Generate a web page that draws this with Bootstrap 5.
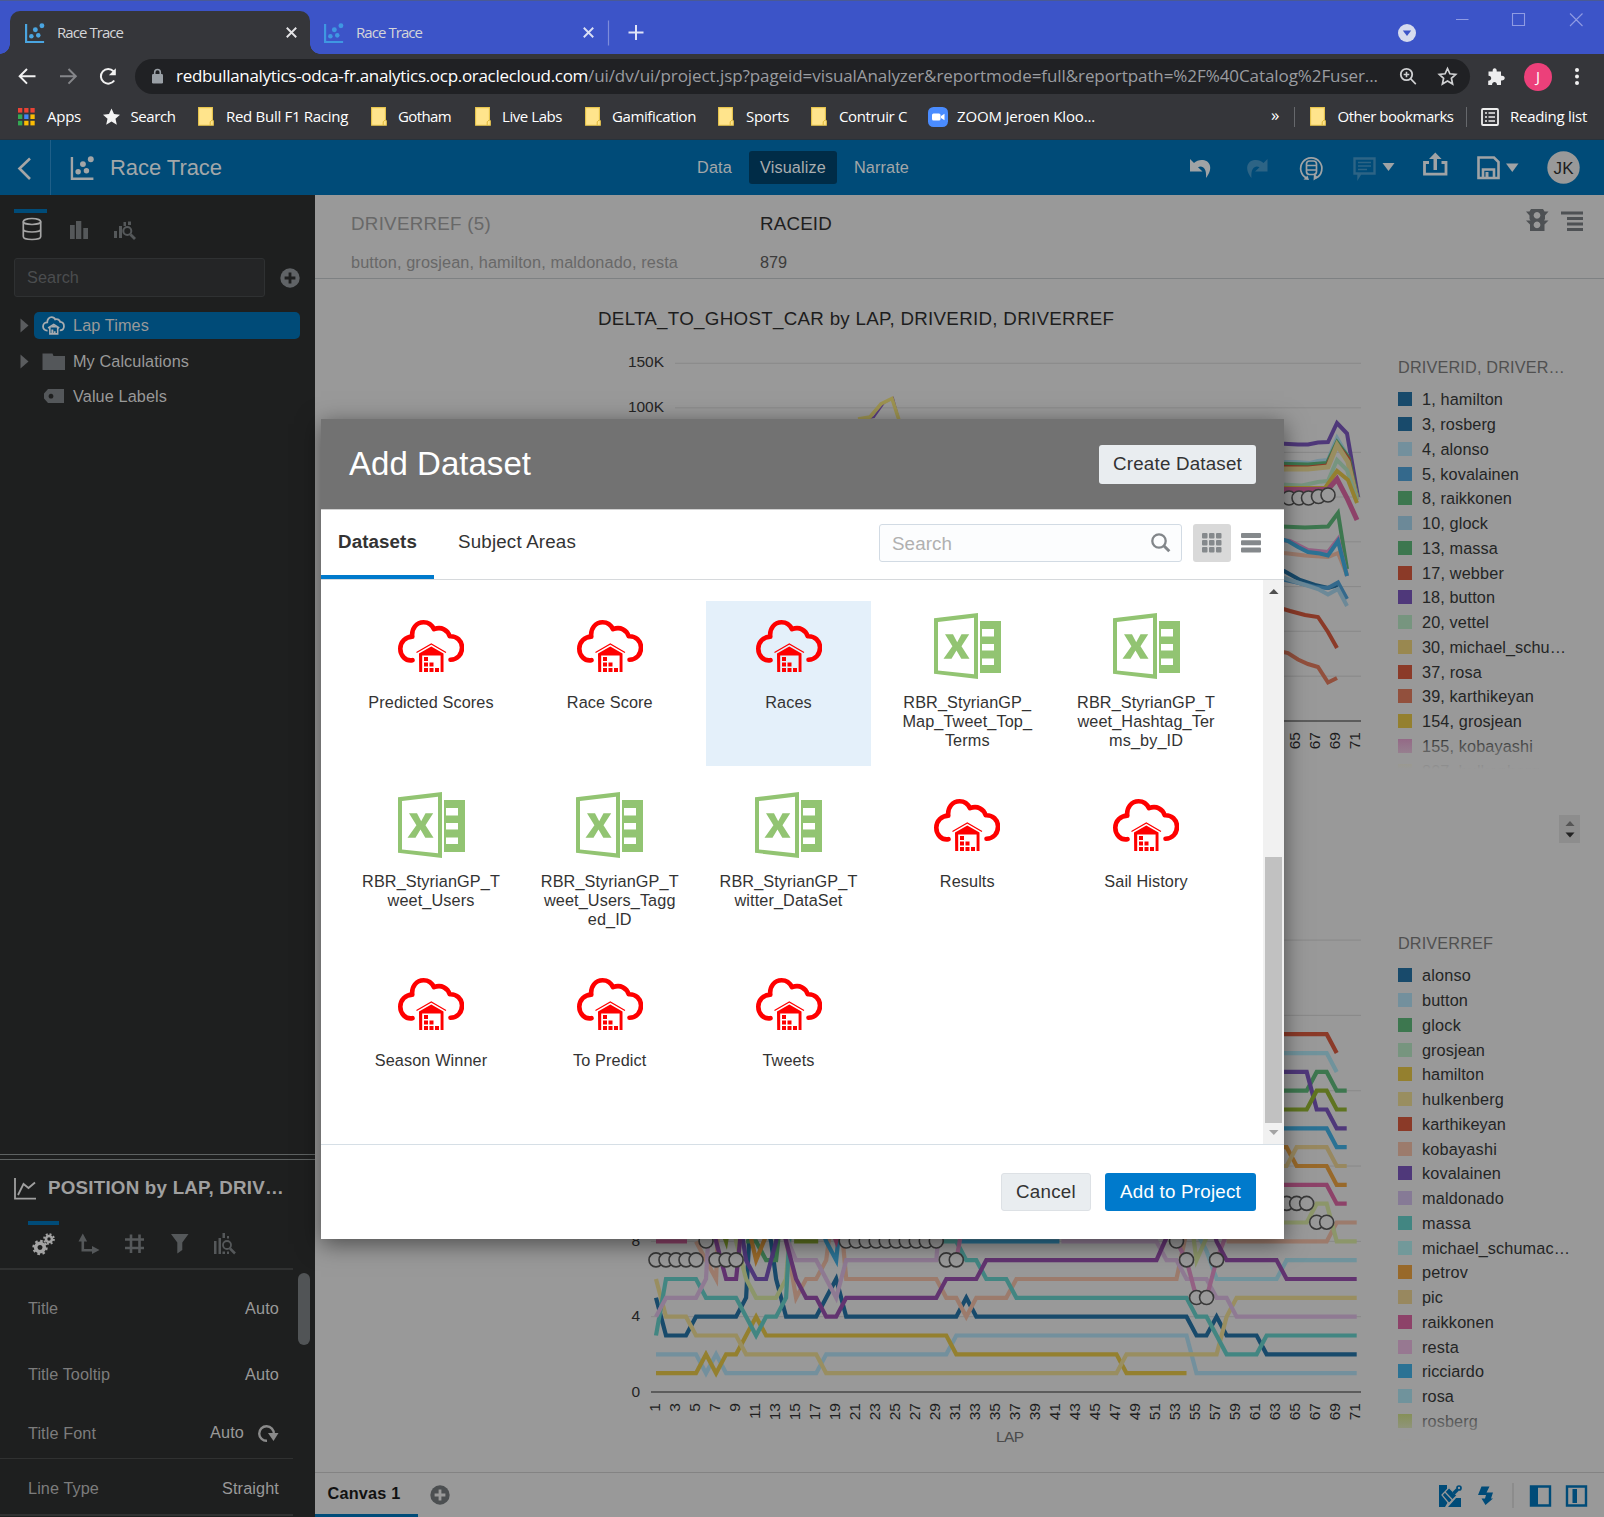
<!DOCTYPE html>
<html lang="en">
<head>
<meta charset="utf-8">
<meta name="viewport" content="width=device-width, initial-scale=1">
<title>Race Trace</title>
<link href="https://cdn.jsdelivr.net/npm/bootstrap@5.3.0/dist/css/bootstrap.min.css" rel="stylesheet">
<style>
body{width:1604px;height:1517px;overflow:hidden;background:#999;font-family:"Liberation Sans",Arial,sans-serif;font-size:16.25px;line-height:19px;color:#1f2020}
svg{display:block;flex:none}
.nowr,[data-w]{white-space:nowrap}
/* browser chrome */
.chrome{font-family:"Open Sans","Noto Sans",sans-serif;color:#fff}
.tabstrip{height:54px;background:#3c54c8;border-top:1px solid #4a5a94;padding:10px 0 0 10px}
.tab-on{width:300px;height:43px;background:#35363a;border-radius:10px 10px 0 0;padding:0 13px 0 15px;position:relative}
.tab-on::before,.tab-on::after{content:"";position:absolute;bottom:0;width:10px;height:10px}
.tab-on::before{left:-10px;background:radial-gradient(circle at 0 0,transparent 9.5px,#35363a 10px)}
.tab-on::after{right:-10px;background:radial-gradient(circle at 100% 0,transparent 9.5px,#35363a 10px)}
.tab-off{width:284px;height:43px;padding:0 0 0 14px}
.tablabel{font-size:15px;color:#d4d5d8}
.addrbar{height:40px;background:#35363a;padding-top:5px}
.omni{width:1335px;height:35px;border-radius:18px;background:#202124;font-size:17px}
.marks{height:46px;background:#35363a;font-size:15px;border-bottom:1px solid #28323a;padding:0 0 0 18px}
.bm{flex:none;height:100%}
/* application */
.apphead{height:55px;background:#004b78;color:#a3a7a9}
.apphead .ttl{font-size:22px}
.modebtn{font-size:16.25px;height:33px;border-radius:3px;padding:0 11px}
.modebtn.on{background:#002c47;color:#a9adaf}
.side{width:315px;height:1322px;background:#1e1f1f;color:#999}
.sidetabs{height:63px;padding-top:14px}
.sbox{width:251px;height:39px;border:1px solid #2f3132;border-radius:3px;background:#242526;color:#4b4d4f;padding-left:12px}
.trow{height:27px;margin-bottom:8.5px}
.pill{height:27px;width:266px;border-radius:5px;padding-left:8px}
.pill.on{background:#004b78}
.props{color:#7c7c7c}
.props b{font-weight:400;color:#999}
.prow{padding:0 14px 0 28px;width:293px}
.filterbar{height:84px;border-bottom:1px solid #7e8183;padding:0 20px 0 36px}
.fname{font-size:18.75px;line-height:22px}
.dimtxt{color:#686868}
.legend{width:206px;color:#242525}
.litem{height:24.75px}
.sw{width:14px;height:14px;flex:none}
.fadeout{position:relative;overflow:hidden}
.fadeout::after{content:"";position:absolute;left:0;right:0;bottom:0;height:40px;background:linear-gradient(rgba(153,153,153,0),#999 90%)}
.spin{width:21px;height:28px;background:#8d8d8d}
.canvasbar{height:45px;border-top:1px solid #838383;padding-right:16px}
.canvastab{width:103px;height:44px;border-bottom:3px solid #004b78;color:#111;font-weight:700}
/* dialog */
.dlg{position:absolute;left:321px;top:419px;width:963px;height:820px;background:#fff;box-shadow:0 5px 22px rgba(0,0,0,.5);color:#333}
.dlghead{height:91px;background:#727272;border-bottom:1px solid #d0d0d0;padding:0 28px}
.dlghead .h{font-size:33px;line-height:38px;color:#fff;font-weight:400}
.ob{border:0;border-radius:3px;background:#e9edf0;color:#333;font-size:18.75px;line-height:22px;height:38px;padding:0;text-align:center}
.ob.blue{background:#007acc;color:#fff}
.dlgtabs{height:70px;border-bottom:1px solid #d6d9dc;font-size:18.75px}
.dtab{height:69px;padding-bottom:6px}
.dtab.on{width:113px;border-bottom:4px solid #007acc;font-weight:700;padding-bottom:2px}
.dsearch{width:303px;height:38px;border:1px solid #d2dbe4;border-radius:3px;background:#fcfdfe;color:#b0b0b0;padding:0 10px 0 12px}
.gbtn{width:38px;height:38px;border-radius:3px;background:#d9d9d9}
.dlgbody{height:564px}
.tiles{padding:21px 0 0 27.5px;display:grid;grid-template-columns:repeat(5,165px);grid-auto-rows:165px;gap:13.75px;flex:1}
.tile{text-align:center;line-height:19px}
.tile.on{background:#e4f0fa}
.tile .pic{height:92px}
.sbar{width:21px;background:#f1f1f1}
.thumb{width:17px;height:266px;background:#c1c1c1}
.dlgfoot{height:95px;border-top:1px solid #d6dfe6;padding:0 28px 0 0}
</style>
<script src="https://cdn.jsdelivr.net/npm/bootstrap@5.3.0/dist/js/bootstrap.bundle.min.js"></script>
</head>
<body class="position-relative">

<svg width="0" height="0" class="position-absolute">
<defs>
<symbol id="scatter" viewBox="0 0 22 22"><path d="M1.2 1v20H21" fill="none" stroke="currentColor" stroke-width="2.4"/><circle cx="7" cy="14.5" r="2.5" fill="currentColor"/><circle cx="11.4" cy="7.4" r="2.7" fill="currentColor"/><circle cx="14.6" cy="13.6" r="2.5" fill="currentColor"/><circle cx="18.6" cy="3" r="2.7" fill="currentColor"/></symbol>
<symbol id="xx" viewBox="0 0 10 10"><path d="M.7.7l8.6 8.6M9.3.7L.7 9.3" stroke="currentColor" stroke-width="1.7"/></symbol>
<symbol id="folder" viewBox="0 0 16 19"><path d="M.6.6h13.8v12.2l.9 1.2v4.3H.6z" fill="#ffe48c" stroke="#e9c64d" stroke-width="1.1"/><path d="M12.2 18v-3.2l2.2-2" fill="none" stroke="#e0b93b"/></symbol>
<symbol id="cloud" viewBox="0 0 66 53"><path d="M14.5 40.2C7.500 41.500 2.300 35.500 2.300 28.800C2.300 21.800 7.600 16.800 14.300 16.600C13.300 8.300 18.600 2.300 25.600 2.300C30 2.300 34 5 36 9.200C43.500 6.200 49.800 10.200 51.600 16.200C58.800 15.800 64 21 64 27.600C64 34.600 59.300 39.600 52.500 39.700" fill="none" stroke="currentColor" stroke-width="4.600" stroke-linecap="round" stroke-linejoin="round"/><path d="M18.500 32.600L33.300 24L48 32.600" fill="none" stroke="currentColor" stroke-width="1.200"/><path d="M21 33.600L33.300 26.500L45.500 33.600V52H42.600V35.500H24.200V52H21.200z" fill="currentColor"/><path d="M26 37h4v4h-4zM26 42.500h4v4h-4zM31.500 42.500h4v4h-4zM26 48h4v4h-4zM31.500 48h4v4h-4zM37 48h4v4h-4z" fill="currentColor"/></symbol>
<symbol id="minicloud" viewBox="0 0 22 18"><path d="M5.300 13.800C2.600 14 1 12 1 10C1 7.600 2.900 6 5 6C5 3 6.800 1 9.200 1C10.800 1 12 1.800 12.600 3.200C15 2.400 16.900 3.600 17.400 5.600C19.600 5.800 21 7.500 21 9.600C21 11.800 19.400 13.500 17 13.600" fill="none" stroke="currentColor" stroke-width="1.700"/><path d="M5.800 11.400L11.200 8L16.500 11.400M7.500 10.800V17h7.500V10.800" fill="none" stroke="currentColor" stroke-width="1.500"/><path d="M7.500 11l3.700-2.500L15 11zM9 12.800h1.800v3.600H9zM11.300 14.600H13v1.800h-1.700z" fill="currentColor"/></symbol>
<symbol id="excel" viewBox="0 0 67 66"><path fill-rule="evenodd" fill="#92c472" d="M0 5.300L44 0V66L0 60.800zM4 9V57.400L40 61.300V4.700z"/><path fill="#92c472" d="M11 21.300h8l4.200 8l4.300-8h7.700L27.500 33.300l8 12.500h-8.200l-4.800-8.200l-5 8.200H9.500L18.400 33.300z"/><path fill-rule="evenodd" fill="#92c472" d="M46 8h21v52H46zM48 16v7.500h12V16zM48 31v6.500h12V31zM48 45.500V52h12v-6.500z"/></symbol>
<symbol id="plusc" viewBox="0 0 20 20"><circle cx="10" cy="10" r="9.700" fill="currentColor"/><path d="M10 4.600v10.800M4.600 10h10.800" stroke="var(--hole)" stroke-width="2.800"/></symbol>
<symbol id="magbars" viewBox="0 0 22 20"><path d="M0 11h3v7H0zM5 6h3v12H5zM9.500 2h2.500v4H9.500zM14 1.500h3V5h-3z" fill="currentColor"/><circle cx="13.300" cy="11" r="4" fill="none" stroke="currentColor" stroke-width="2"/><path d="M16.500 14.500l4.500 4.500" stroke="currentColor" stroke-width="2.800"/></symbol>
</defs></svg>

<!-- browser window -->
<div class="chrome">
  <div class="tabstrip d-flex">
    <div class="tab-on d-flex align-items-center">
      <svg width="20" height="20" style="color:#4aa5e0"><use href="#scatter"/></svg>
      <span class="tablabel ms-2 ps-1" data-w="70">Race Trace</span>
      <svg class="ms-auto" width="11" height="11" style="color:#e4e4e6"><use href="#xx"/></svg>
    </div>
    <div class="tab-off d-flex align-items-center">
      <svg width="20" height="20" style="color:#3f97e2"><use href="#scatter"/></svg>
      <span class="tablabel ms-2 ps-1" data-w="70">Race Trace</span>
      <svg class="ms-auto" width="11" height="11" style="color:#dadff5"><use href="#xx"/></svg>
    </div>
    <svg width="50" height="43" viewBox="594 11 50 43"><path d="M608.500 20.500v25" stroke="#7d8cdb" stroke-width="1.200"/><path d="M636 25v15M628.500 32.500h15" stroke="#e0e4f7" stroke-width="2"/></svg>
    <svg class="ms-auto" width="214" height="43" viewBox="1390 11 214 43"><circle cx="1407" cy="33" r="9" fill="#d6dbee"/><path d="M1402.800 30.500h8.400l-4.200 5.500z" fill="#3c54c8"/><path d="M1456 19.500h12.500M1512.500 13.500h12v12h-12zM1570 13.500l12.500 12.500M1582.500 13.500L1570 26" fill="none" stroke="#8f9be3" stroke-width="1.100"/></svg>
  </div>
  <div class="addrbar d-flex">
    <svg width="135" height="35" viewBox="0 59 135 35"><g fill="none" stroke-width="2"><path d="M35.500 76.300H20M27 69l-7.300 7.300L27 83.600" stroke="#f1f1f1"/><path d="M60 76.300h15.500M68.500 69l7.300 7.300l-7.300 7.300" stroke="#85868a"/><path d="M114.200 80.500A7.300 7.300 0 1 1 113.500 71.300" stroke="#f1f1f1"/></g><path d="M115.800 68.300v6.900h-6.900z" fill="#f1f1f1"/></svg>
    <div class="omni d-flex align-items-center">
      <svg class="ms-3" width="13" height="17" viewBox="0 0 13 17"><rect x="1" y="6" width="11" height="9.500" rx="1.200" fill="#9aa0a6"/><path d="M3.700 6.500V4.300a2.800 2.800 0 0 1 5.600 0v2.200" fill="none" stroke="#9aa0a6" stroke-width="1.600"/></svg>
      <span class="ms-2 ps-1 text-white" style="margin-top:-2px" data-w="416" id="host">redbullanalytics-odca-fr.analytics.ocp.oraclecloud.com</span><span style="color:#9a9ca0;margin-top:-2px" data-w="790">/ui/dv/ui/project.jsp?pageid=visualAnalyzer&amp;reportmode=full&amp;reportpath=%2F%40Catalog%2Fuser...</span>
      <svg class="ms-auto me-2" width="70" height="35" viewBox="1392 59 70 35"><circle cx="1406.500" cy="74.500" r="5.700" fill="none" stroke="#cfd0d2" stroke-width="1.800"/><path d="M1410.500 78.600l5.300 5.500M1403.700 74.500h5.600M1406.500 71.700v5.600" stroke="#cfd0d2" stroke-width="1.600"/><path d="M1447.500 68.500l2.400 5.300l5.800.6l-4.300 3.900l1.200 5.700l-5.100-2.900l-5.100 2.900l1.200-5.700l-4.300-3.900l5.800-.6z" fill="none" stroke="#cfd0d2" stroke-width="1.700"/></svg>
    </div>
    <svg width="134" height="35" viewBox="1470 59 134 35"><path d="M1488.500 71.500h4.200c-.8-4.400 4.600-4.400 4 0h4.300v4.300c5-.8 5 5.200 0 4.600v4.600h-4c0-4-5-4-5 0h-3.800v-4.300c4 0 4-4.800.3-5z" fill="#ededee"/><circle cx="1538" cy="77" r="14" fill="#ec407a"/><text x="1538" y="82.300" font-size="15" fill="#fff" text-anchor="middle">J</text><g fill="#f1f1f1"><circle cx="1577" cy="70" r="2"/><circle cx="1577" cy="76.500" r="2"/><circle cx="1577" cy="83" r="2"/></g></svg>
  </div>
  <div class="marks d-flex align-items-center" id="marks"></div>
</div>

<!-- application header -->
<div class="apphead d-flex align-items-center">
  <svg width="110" height="55" viewBox="0 140 110 55"><path d="M30 158.500L19.500 168.500L30 179" fill="none" stroke="#a6a6a6" stroke-width="2.600"/><path d="M50.500 140v55" stroke="#1f5f88"/><g color="#a3a5a6" stroke="none"><use href="#scatter" x="70.500" y="156" width="24" height="24"/></g></svg>
  <span class="ttl" data-w="112">Race Trace</span>
  <div class="d-flex align-items-center" style="margin-left:464px">
    <div class="modebtn d-flex align-items-center"><span data-w="35">Data</span></div>
    <div class="modebtn on d-flex align-items-center" style="margin-left:6px"><span data-w="66">Visualize</span></div>
    <div class="modebtn d-flex align-items-center" style="margin-left:6px"><span data-w="55">Narrate</span></div>
  </div>
  <svg class="ms-auto" width="424" height="55" viewBox="1180 140 424 55">
    <path d="M1190 159v12.500h12.500l-4.500-4.300c4-2.200 9 .5 8 10.800c7-8.500 5-17-3-18c-3.500-.4-6.500.6-9 3z" fill="#a0a3a5"/>
    <path d="M1267.500 159v12.500H1255l4.500-4.300c-4-2.200-9 .5-8 10.800c-7-8.500-5-17 3-18c3.500-.4 6.500.6 9 3z" fill="#2d6485"/>
    <g fill="none" stroke="#a0a3a5" stroke-width="1.700"><path d="M1307 178.200A10.600 10.600 0 1 1 1316 178"/><rect x="1306.500" y="161" width="10" height="13.500" rx="3"/><path d="M1306.500 165.500h10M1306.500 170h10"/></g><path d="M1314 173.500l4 4-4.500 3zM1309 180l-5.500-.5 4-4z" fill="#a0a3a5"/>
    <path d="M1354.500 158.500h20v15h-14l-2 3.300v-3.300h-4z" fill="none" stroke="#2d6485" stroke-width="2.400"/><path d="M1358 162.500h13M1358 166h13M1358 169.500h9" stroke="#2d6485" stroke-width="1.500"/><path d="M1382.500 163h12l-6 8z" fill="#a0a3a5"/>
    <path d="M1429 162.500h-4.500v11.700h21.500v-11.700h-4.500" fill="none" stroke="#a0a3a5" stroke-width="2.800"/><path d="M1433.500 170v-11h-4.500l6.300-6.500l6.300 6.500h-4.600v11z" fill="#a0a3a5"/>
    <path d="M1478.500 157.500h15.500l4.500 4.500v16h-20zM1483 178v-8.500h11v8.500" fill="none" stroke="#a0a3a5" stroke-width="2.600"/><path d="M1485.500 172h3v6h-3z" fill="#a0a3a5"/><path d="M1506 163.500h12.500l-6.200 8.500z" fill="#a0a3a5"/>
    <circle cx="1563.500" cy="167.500" r="16.200" fill="#999"/><text x="1563.500" y="173.500" font-size="17" fill="#1d1d1d" text-anchor="middle" textLength="20">JK</text>
  </svg>
</div>

<div class="d-flex">
  <!-- data panel -->
  <aside class="side d-flex flex-column flex-shrink-0">
    <svg width="315" height="63" viewBox="0 195 315 63"><path d="M14 209h33v4H14z" fill="#004b78"/><g fill="none" stroke="#a5a5a5" stroke-width="1.700"><ellipse cx="32" cy="221.500" rx="8.700" ry="3"/><path d="M23.300 221.500v15c0 4 17.400 4 17.400 0v-15M23.300 229c0 4 17.400 4 17.400 0"/></g><path d="M70 225h4.700v14H70zM76 221h5.300v18H76zM83.300 228h4.700v11h-4.700z" fill="#55585a"/><g color="#55585a"><use href="#magbars" x="114" y="220" width="22" height="20"/></g></svg>
    <div class="d-flex align-items-center" style="padding-left:14px"><div class="sbox d-flex align-items-center"><span data-w="52">Search</span></div><svg style="margin-left:15px;color:#606366;--hole:#1e1f1f" width="20" height="20"><use href="#plusc"/></svg></div>
    <div style="padding-top:15px">
      <div class="trow d-flex align-items-center"><svg width="34" height="27"><path d="M20.500 6.500v14l8-7z" fill="#5a5c5e"/></svg><div class="pill on d-flex align-items-center"><svg width="23" height="19" style="color:#a9adb0"><use href="#minicloud"/></svg><span style="margin-left:8px" data-w="76">Lap Times</span></div></div>
      <div class="trow d-flex align-items-center"><svg width="34" height="27"><path d="M20.500 6.500v14l8-7z" fill="#5a5c5e"/></svg><div class="pill d-flex align-items-center"><svg width="23" height="19"><path d="M.5 18V1.500h10l1 2.500H23v14z" fill="#54575a"/></svg><span style="margin-left:8px" data-w="116">My Calculations</span></div></div>
      <div class="trow d-flex align-items-center"><svg width="34" height="27"></svg><div class="pill d-flex align-items-center"><svg width="23" height="19"><path fill-rule="evenodd" d="M6 2h16v14H6L2 11.500v-5zM9 6.800a2.400 2.400 0 1 0 .01 0z" fill="#54575a"/></svg><span style="margin-left:8px" data-w="94">Value Labels</span></div></div>
    </div>
    <div class="mt-auto props" style="height:363px">
      <div style="height:6px;border-top:1px solid #5e6262;border-bottom:1px solid #5e6262"></div>
      <div class="d-flex align-items-center" style="height:55px;padding-left:14px;color:#a0a0a0"><svg width="22" height="22" style="margin-top:3px"><path d="M1 0v20.700h21M4 17L9.500 6l5 4L21 4.500" fill="none" stroke="#a0a0a0" stroke-width="1.800"/></svg><span class="fw-bold" style="margin-left:12px;font-size:18.75px" data-w="236">POSITION by LAP, DRIV…</span></div>
      <svg width="315" height="55" viewBox="0 1215 315 55"><path d="M28 1221h31v4H28z" fill="#004b78"/>
        <g fill="none" stroke="#a3a3a3"><circle cx="40" cy="1247.500" r="4.300" stroke-width="3.600"/><circle cx="40" cy="1247.500" r="6.600" stroke-width="2.200" stroke-dasharray="2.600 2.580"/><circle cx="49" cy="1239" r="3" stroke-width="2.600"/><circle cx="49" cy="1239" r="4.900" stroke-width="1.900" stroke-dasharray="1.950 1.900"/></g>
        <g stroke="#55585a" stroke-width="2.600" fill="none"><path d="M82.800 1240v10.200h10"/><path d="M131 1234.500v18.500M139.500 1234.500v18.500M125 1239.500h19M125 1248h19"/></g><path d="M78.500 1241.500l4.300-8l4.300 8zM92 1246l7.500 4l-7.500 4zM171 1234h17.500l-6.200 8.500v7.500l-5 3.500v-11z" fill="#55585a"/>
        <path d="M214 1241h2.500v13H214zM218.500 1238h2.500v16h-2.500zM222.500 1233h2.500v5h-2.500zM227 1236h2v2.500h-2zM222.500 1251.500h2.500v2.500h-2.500zM227 1251.500h2v2.500h-2z" fill="#55585a"/><circle cx="227" cy="1245" r="4" fill="none" stroke="#55585a" stroke-width="1.800"/><path d="M230 1248.500l5 5" stroke="#55585a" stroke-width="2.500"/>
        <path d="M0 1269h293" stroke="#303131" stroke-width="2"/></svg>
      <div class="d-flex">
        <div>
          <div class="prow d-flex align-items-center justify-content-between" style="height:77px"><span data-w="30">Title</span><b data-w="34">Auto</b></div>
          <div class="prow d-flex align-items-center justify-content-between" style="height:55px"><span data-w="82">Title Tooltip</span><b data-w="34">Auto</b></div>
          <div class="prow d-flex align-items-center" style="height:56px;padding-top:6px"><span data-w="68">Title Font</span><b class="ms-auto" style="margin-top:-2px" data-w="34">Auto</b><svg style="margin-left:12px" width="23" height="21"><path d="M11 17.800A7.300 7.300 0 1 1 17.800 11" fill="none" stroke="#8a8a8a" stroke-width="2.400"/><path d="M12 10h10.500l-5 8z" fill="#8a8a8a"/></svg></div>
          <div class="prow d-flex align-items-center justify-content-between" style="height:58px;border-top:1px solid #303131;border-bottom:2px solid #303131;padding-top:4px"><span data-w="71">Line Type</span><b data-w="57">Straight</b></div>
        </div>
        <div style="margin:3px 0 0 5px;width:12px;height:72px;border-radius:6px;background:#515456"></div>
      </div>
    </div>
  </aside>

  <!-- canvas -->
  <main class="flex-grow-1">
    <div class="filterbar d-flex">
      <div style="width:409px;padding-top:18px" class="dimtxt"><div class="fname mb-3 pb-1"><span data-w="140">DRIVERREF (5)</span></div><div style="margin-top:-2px"><span data-w="327">button, grosjean, hamilton, maldonado, resta</span></div></div>
      <div style="padding-top:18px"><div class="fname mb-3 pb-1"><span data-w="72">RACEID</span></div><div style="margin-top:-2px;color:#3c3c3c"><span data-w="27">879</span></div></div>
      <svg class="ms-auto" width="60" height="40" viewBox="1525 195 60 40"><path fill-rule="evenodd" d="M1532 209h12l1.500 2.500h4l-3.500 4v3.500l-1 1.500h4.500l-4 4v6.500h-14.500v-6.500l-4-4h4.500l-1-1.500v-3.500l-3.500-4h3.500zM1538 212a3.400 3.400 0 1 0 .01 0zM1538 221.500a3.400 3.400 0 1 0 .01 0z" fill="#4e5154"/><path d="M1562 211.500h22v3h-22zM1568 217h16v3h-16zM1568 222.500h16v3h-16zM1568 228h16v3h-16z" fill="#4e5154"/></svg>
    </div>
    <div class="d-flex">
      <svg id="c1" width="1083" height="601" viewBox="315 279 1083 601" font-size="16.250"></svg>
      <div class="legend" style="padding-top:79px">
        <div class="dimtxt" style="height:29px"><span data-w="167" style="color:#505050">DRIVERID, DRIVER…</span></div>
        <div class="fadeout" id="l1" style="height:386px"></div>
        <div class="spin d-flex flex-column align-items-center justify-content-center" style="margin:42px 0 0 161px"><svg width="10" height="18"><path d="M.5 6h9L5 1z" fill="#555"/><path d="M.5 12.500h9L5 17.500z" fill="#222"/></svg></div>
      </div>
    </div>
    <div class="d-flex">
      <svg id="c2" width="1083" height="592" viewBox="315 880 1083 592" font-size="15.500"></svg>
      <div class="legend" style="padding-top:54px">
        <div style="height:29px"><span data-w="95" style="color:#505050">DRIVERREF</span></div>
        <div class="fadeout" id="l2" style="height:482px"></div>
      </div>
    </div>
    <div class="canvasbar d-flex align-items-center">
      <div class="canvastab d-flex align-items-center justify-content-center"><span data-w="73" style="margin-left:-5px">Canvas 1</span></div>
      <svg width="20" height="20" style="margin-left:12px;color:#4c4f51;--hole:#999"><use href="#plusc"/></svg>
      <svg class="ms-auto" width="150" height="44" viewBox="1438 1473 150 44"><path d="M1439 1485h8v5l-4 4l5 8-3 5h-6zM1461 1507h-13l8-9h5z" fill="#004b78"/><path d="M1442 1495l7-7.500l8 8l-8 8z" fill="#004b78" stroke="#999" stroke-width="1.200"/><path d="M1445 1492l7.500 8M1453 1493l5.500-6" stroke="#999" stroke-width="1.200"/><path d="M1453.500 1493.500l4-4" stroke="#004b78" stroke-width="3.500"/><circle cx="1459" cy="1488" r="2" fill="none" stroke="#004b78" stroke-width="1.700"/><path d="M1481.500 1486.500h8l-3 6h6.500l-2 6h2l-7.500 6.500l-4-6.500h3.500l1-3.500h-8z" fill="#004b78"/><path d="M1513 1483v25" stroke="#888" stroke-width="1.500"/><path d="M1531 1486.500h19v19h-19zM1567 1486.500h19v19h-19z" fill="none" stroke="#004b78" stroke-width="2.400"/><path d="M1531 1486h7v20h-7zM1572.500 1489h4.500v14h-4.500z" fill="#004b78"/></svg>
    </div>
  </main>
</div>

<!-- Add Dataset dialog -->
<div class="dlg" role="dialog">
  <div class="dlghead d-flex align-items-center justify-content-between"><span class="h" data-w="182">Add Dataset</span><button class="btn ob" style="width:157px;height:39px"><span data-w="129">Create Dataset</span></button></div>
  <div class="dlgtabs d-flex">
    <div class="dtab on d-flex align-items-center justify-content-center"><span data-w="79">Datasets</span></div>
    <div class="dtab d-flex align-items-center" style="margin-left:24px"><span data-w="118">Subject Areas</span></div>
    <div class="d-flex align-items-center ms-auto" style="height:66px;padding-right:23px">
      <div class="dsearch d-flex align-items-center justify-content-between"><span data-w="60">Search</span><svg width="20" height="20"><circle cx="8" cy="8" r="6.700" fill="none" stroke="#82868a" stroke-width="2.300"/><path d="M12.800 12.800l5.500 5.500" stroke="#82868a" stroke-width="3"/></svg></div>
      <div class="gbtn d-flex align-items-center justify-content-center" style="margin-left:11px"><svg width="20" height="20" fill="#85898c"><rect width="5.500" height="5.500" rx="1"/><rect x="7" width="5.500" height="5.500" rx="1"/><rect x="14" width="5.500" height="5.500" rx="1"/><rect y="7" width="5.500" height="5.500" rx="1"/><rect x="7" y="7" width="5.500" height="5.500" rx="1"/><rect x="14" y="7" width="5.500" height="5.500" rx="1"/><rect y="14" width="5.500" height="5.500" rx="1"/><rect x="7" y="14" width="5.500" height="5.500" rx="1"/><rect x="14" y="14" width="5.500" height="5.500" rx="1"/></svg></div>
      <svg width="20" height="20" fill="#85898c" style="margin-left:10px"><rect width="20" height="5" rx="1"/><rect y="7.300" width="20" height="5" rx="1"/><rect y="14.600" width="20" height="5" rx="1"/></svg>
    </div>
  </div>
  <div class="dlgbody d-flex">
    <div class="tiles" id="tiles"></div>
    <div class="sbar d-flex flex-column align-items-center justify-content-between"><svg width="21" height="20"><path d="M6 14h9.500l-4.700-5z" fill="#4f4f4f"/></svg><div class="mt-auto thumb"></div><svg width="21" height="21"><path d="M6 7h9.500l-4.700 5z" fill="#a3a3a3"/></svg></div>
  </div>
  <div class="dlgfoot d-flex align-items-center justify-content-end"><button class="btn ob" style="width:90px;border:1px solid #dde1e5"><span data-w="60">Cancel</span></button><button class="btn ob blue" style="width:151px;margin-left:14px"><span data-w="121">Add to Project</span></button></div>
</div>

<script>
const $ = id => document.getElementById(id);

// bookmarks bar: [label, icon, offset from icon to label, slot width, label width]
const ic = {
  apps:'<svg width="17" height="18">'+['#ea4335','#ea4335','#ea4335','#34a853','#4285f4','#fbbc04','#34a853','#fbbc04','#fbbc04'].map((c,i)=>`<rect x="${i%3*6.2}" y="${(i/3|0)*6.4}" width="4.300" height="4.600" fill="${c}"/>`).join('')+'</svg>',
  star:'<svg width="17" height="17" viewBox="0 0 17 17"><path d="M8.500.5l2.500 5.600l6 .6l-4.500 4l1.300 6l-5.300-3.100l-5.300 3.100l1.300-6l-4.500-4l6-.6z" fill="#f4f4f4"/></svg>',
  f:'<svg width="16" height="19"><use href="#folder"/></svg>',
  zoom:'<svg width="20" height="20"><rect width="20" height="20" rx="5.500" fill="#4a8cff"/><rect x="4" y="6.500" width="8.500" height="7" rx="1.500" fill="#fff"/><path d="M13 9l3.500-2.300v6.600L13 11z" fill="#fff"/></svg>',
  list:'<svg width="19" height="18"><rect x="1" y="1" width="16" height="16" rx="1" fill="none" stroke="#eee" stroke-width="1.800"/><path d="M4 5h2M4 9h2M4 13h2M7.500 5H14M7.500 9H14M7.500 13H14" stroke="#eee" stroke-width="1.600"/></svg>'
};
const bms=[['Apps','apps',29,84.5,34],['Search','star',28,95.5,45],['Red Bull F1 Racing','f',28,173,122],['Gotham','f',27,104,53],['Live Labs','f',27,110,60],['Gamification','f',27,133,84],['Sports','f',28,93,43],['Contruir C','f',28,117,68],['ZOOM Jeroen Kloo...','zoom',29,343,138]];
const bm=(b)=>`<div class="bm d-flex align-items-center" style="width:${b[3]}px"><span class="flex-shrink-0" style="width:${b[2]}px">${ic[b[1]]}</span><span data-w="${b[4]}">${b[0]}</span></div>`;
$('marks').innerHTML = bms.map(bm).join('')+
 '<span class="flex-shrink-0" style="width:23px;margin-top:-4px;font-size:17px">»</span><span style="width:1px;height:20px;background:#66686c;margin-right:15px"></span>'+
 bm(['Other bookmarks','f',27.5,157,116])+'<span style="width:1px;height:20px;background:#66686c;margin:0 14px 0 -1px"></span>'+bm(['Reading list','list',29,110,77]);

// legends
const leg=a=>a.map(([t,c,w])=>`<div class="litem d-flex align-items-center"><span class="sw"  style="background:${c}"></span><span style="margin-left:10px;padding-top:1px" ${w?`data-w="${w}"`:'data-e="1"'}>${t}</span></div>`).join('');
$('l1').innerHTML=leg([['1, hamilton','#184a6b',81],['3, rosberg','#184a6b',74],['4, alonso','#73909d',67],['5, kovalainen','#34698c',97],['8, raikkonen','#3d774f',90],['10, glock','#6c8998',66],['13, massa','#3d774f',76],['17, webber','#8b3a28',82],['18, button','#4f387a',73],['20, vettel','#77957f',67],['30, michael_schu…','#998850',144],['37, rosa','#8b3a28',60],['39, karthikeyan','#92503d',112],['154, grosjean','#94802f',100],['155, kobayashi','#936083',111],['807, hulkenberg','#a39a5a',118]]);
$('l2').innerHTML=leg([['alonso','#184a6b',49],['button','#73909d',46],['glock','#3d774f',39],['grosjean','#77957f',63],['hamilton','#94802f',62],['hulkenberg','#998e60',82],['karthikeyan','#8b3a28',84],['kobayashi','#9c7b6c',75],['kovalainen','#4f387a',79],['maldonado','#867a96',82],['massa','#428682',49],['michael_schumac…','#72999a',148],['petrov','#98692a',46],['pic','#98885f',21],['raikkonen','#8d4269',72],['resta','#977891',37],['ricciardo','#2b7294',62],['rosa','#70939c',32],['rosberg','#7f8d43',56],['vergne','#98926a',49]]);

// dataset tiles
$('tiles').innerHTML=[['Predicted Scores'],['Race Score'],['Races',0,1],['RBR_StyrianGP_|Map_Tweet_Top_|Terms',1],['RBR_StyrianGP_T|weet_Hashtag_Ter|ms_by_ID',1],['RBR_StyrianGP_T|weet_Users',1],['RBR_StyrianGP_T|weet_Users_Tagg|ed_ID',1],['RBR_StyrianGP_T|witter_DataSet',1],['Results'],['Sail History'],['Season Winner'],['To Predict'],['Tweets']]
.map(([t,x,on])=>`<div class="tile ${on?'on':''}"><div class="pic d-flex justify-content-center" style="padding-top:${x?12:19}px">${x?'<svg width="67" height="66"><use href="#excel"/></svg>':'<svg width="66" height="53" style="color:#fe0000"><use href="#cloud"/></svg>'}</div><div style="letter-spacing:.1px">${t.replace(/\|/g,'<br>')}</div></div>`).join('');

// charts
const X=n=>656+(n-1)*10.01, Y=p=>1392-18.83*p;
const pl=(pts,c,w=4.2)=>`<polyline points="${pts}" fill="none" stroke="${c}" stroke-width="${w}"/>`;
const circ=(x,y)=>`<circle cx="${x}" cy="${y}" r="7" fill="#999" stroke="#383838" stroke-width="1.600"/>`;
const tick=(n,y)=>`<text transform="translate(${X(n)+3.5} ${y}) rotate(-90)" text-anchor="end" font-size="15.500" fill="#1e1e1e">${n}</text>`;
let s='<text x="598" y="325" font-size="18.750" textLength="516" fill="#1d1d1d">DELTA_TO_GHOST_CAR by LAP, DRIVERID, DRIVERREF</text>';
[363.3,407.8,452.4,497,541.8,586.6,631.3,676.2].forEach(y=>s+=`<path d="M675 ${y}H1361" stroke="#898989"/>`);
s+='<path d="M651 721H1361" stroke="#5c5c5c" stroke-width="2"/><text x="664" y="367" text-anchor="end" fill="#242424" textLength="36" font-size="15.500">150K</text><text x="664" y="412" text-anchor="end" fill="#242424" textLength="36" font-size="15.500">100K</text>';
for(let n=1;n<=71;n+=2)s+=tick(n,732);
s+=pl('862,419 874,417 884,403 893,398 899,420','#5a3d80',2)+pl('858,419 870,417 881,404 892,398.500 899,420','#9d9350',3.6);
const r1=[
['#4f387a','1270,443 1298,444.500 1308,444.500 1318,442.500 1328,442 1337,423 1347,433.500 1358,497'],
['#73909d','1270,462 1295,462 1310,463 1318,461 1328,460 1337,438 1347,455 1357,496'],
['#3d774f','1270,463.500 1308,464.500 1327,463 1337,442 1349,458 1357,497'],
['#8b3a28','1270,466 1308,467 1327,465 1337,443.500 1349,459 1357,499',3],
['#998e60','1270,469 1308,469 1328,467 1337,445 1348,462 1357,500',5],
['#77957f','1270,484 1302,485.500 1318,482 1328,481 1337,460 1347,470 1357,500'],
['#94802f','1270,486 1280,488 1325,488 1337,471 1348,480 1357,503'],
['#8d4269','1270,489.500 1328,489.500 1337,479 1347,498 1357,520',5],
['#3d774f','1270,526 1305,527.500 1328,526.500 1338,513 1347,569'],
['#936083','1270,539 1290,541 1308,550 1328,552 1338,539 1347,576'],
['#9c7b6c','1270,551 1284,553 1305,555.500 1328,557 1338,553 1347,575'],
['#2b7294','1270,536 1288,541 1298,547 1308,552 1320,553.500 1328,555.500 1338,541 1347,576'],
['#184a6b','1270,568 1284,571 1300,580 1315,585 1328,588 1338,585'],
['#34698c','1270,577 1295,582 1315,587 1328,588 1338,582.500 1347,599'],
['#6c8998','1270,573 1290,580 1318,589 1328,594.500 1338,589 1347,606'],
['#8b3a28','1270,605 1290,611 1305,615 1318,617 1328,632 1337,648'],
['#92503d','1270,649 1288,653 1298,659.500 1308,664 1318,667 1328,682.500 1337,678']];
r1.forEach(([c,p,w])=>s+=pl(p,c,w||4));
[[1279,498],[1289,498],[1299,498],[1308.500,498],[1318.500,496.500],[1328,495]].forEach(c=>s+=circ(...c));
$('c1').innerHTML=s;

s='';
[4,8,12,16,20,24].forEach(p=>s+=`<path d="M651 ${Y(p)}H1361" stroke="#898989"/>`);
s+='<path d="M651 1392H1361" stroke="#5c5c5c" stroke-width="2"/>';
[[0,0],[4,4],[8,8]].forEach(([p])=>s+=`<text x="640" y="${Y(p)+4.500}" text-anchor="end" fill="#242424">${p}</text>`);
for(let n=1;n<=71;n+=2)s+=tick(n,1403);
s+='<text x="996" y="1442" fill="#4b4b4b" textLength="28">LAP</text>';
const L=[
['#8d4269','1,8 4.1,8'],['#5f7420','7.3,9 8,8 8.3,9'],['#5f7420','14.8,8 17.2,8'],
['#73909d','1,2 5,2 6,1 7,2 8,1 17,1 18,2 30,2 31,3 54,3 55,1 71,1'],
['#184a6b','1,5 2,3 4,3 5,4 9,4 10,5 10.3,8 10.6,9'],['#184a6b','12,9 12.5,8 13,6 14,4 17,4 18,5 19,6 20,4 31,4 32,5 33,4 54,4 55,3 56,3 57,4 58,3 61,3 62,2 71,2'],
['#3d774f','10,8 11,8 12,7 13,7 13.4,9'],['#98692a','10.3,8.6 11,7 12,8.300 12.5,9'],
['#94802f','1,1 5,1 6,2 7,1 8,2 9,2 10,3 11,4 12,3 30,3 31,2 47,2 48,1 54,1'],
['#998e60','1,6 2,4 4,4 5,3 9,3 10,2 17,2 18,1 47,1 48,2 57,2 58,4 59,5 71,5'],
['#9c7b6c','5,8 6,7 7,6 7.2,9'],['#9c7b6c','13.7,9 15,5 16,6 17,6 18,7 18.5,9'],['#9c7b6c','19.5,9 20,6 29,6 30,5 31,5 32,4 33,5 36,5 37,6 53,6 54,8.5'],['#9c7b6c','58,8 68,8 69,9 71,9'],
['#70939c','55,8.5 56,7.5 57,6 63,6 64,7 71,7'],
['#8c966a','8.8,9 9,8 10,6 11,5 13,5 14,6 14.3,8 14.5,9'],['#8c966a','54.5,9 55,7 56,8.2 56.4,9'],
['#428682','1,3 2,6 5,6 6,5 9,5 10,4 11,3 12,4 13,4 14,5 14.3,8 14.5,9'],['#428682','29.5,8 31,8 32,7 33,7 34,6 36,6 37,5 54,5 55,4 56,4 57,3 58,2 61,2 62,3 71,3'],
['#4f387a','9.4,9 10,7 11,6 12,6 13,8 13.3,9'],
['#2b7294','17.6,8.6 18,8 19,7 19.3,8.6'],['#2b7294','31.5,8 41.3,8'],
['#8f7a93','1,4 2,5 5,5 6,6 6.3,9'],['#8f7a93','13.4,9 15,7 17,7 18,6 19,5 20,7 29,7 29.3,9'],['#8f7a93','41.5,8 51,8 52,7 53,7 54,6 56,6 57,5 58,5 59,4 71,4'],
['#936083','31,7 31.5,8.5'],['#936083','53,8 54,7 55,5 56,5 57,7 58,8.4'],['#8d4269','18.7,8.4 19,8 19.3,8.6'],
['#623370','6.6,9 7,8 8,6 9,6 9.5,8.6'],['#623370','13.6,9 14,8 15,6 16,5 17,5 18,4 19,4 20,5 29,5 30,6 33,6 34,7 51,7 52,8.2 53,9'],['#623370','56.5,9 57,8 58,7 63,7 64,6 71,6'],
['#8b3a28','60,19 68,19 69,18'],['#70939c','60,18 68,18 69,17'],
['#3d774f','60,16 66,16 67,17 68,17 69,16 70,16'],['#4f387a','60,17 66,17 67,15 68,15 69,14 70,14'],['#5f7420','60,15 66,15 67,16 68,16 69,15 70,15'],
['#2b7294','60,14 68,14 69,13 70,13'],['#98692a','60,13 64,13 65,12 68,12 69,11 70,11'],['#98885f','60,12 64,12 65,13 68,13 69,12 70,12'],
['#8d4269','60,11 68,11 69,10 70,10'],['#8c966a','60,9 66,9 67,10 68,10 69,8 71,8']];
L.forEach(([c,p])=>s+=pl(p.split(' ').map(q=>{const[a,b]=q.split(',');return X(+a).toFixed(1)+','+Y(+b).toFixed(1)}).join(' '),c));
const C=[[6,8],...[1,2,3,4,5,7,8,9].map(n=>[n,7]),...Array.from({length:10},(_,i)=>[20+i,8]),[30,7],[31,7],[53,8],[54,7],[57,7],[55,5],[56,5],[64,10],[65,10],[66,10],[67,9],[68,9]];
C.forEach(([n,p])=>s+=circ(X(n),Y(p)-.3));
$('c2').innerHTML=s;

// tune tracking so each label fills its measured width
document.querySelectorAll('[data-w]').forEach(e=>{
  e.style.display='inline-block';
  const n=e.textContent.length,d=+e.dataset.w-e.getBoundingClientRect().width;
  e.style.letterSpacing=(d/n).toFixed(3)+'px';
});
</script>
</body>
</html>
